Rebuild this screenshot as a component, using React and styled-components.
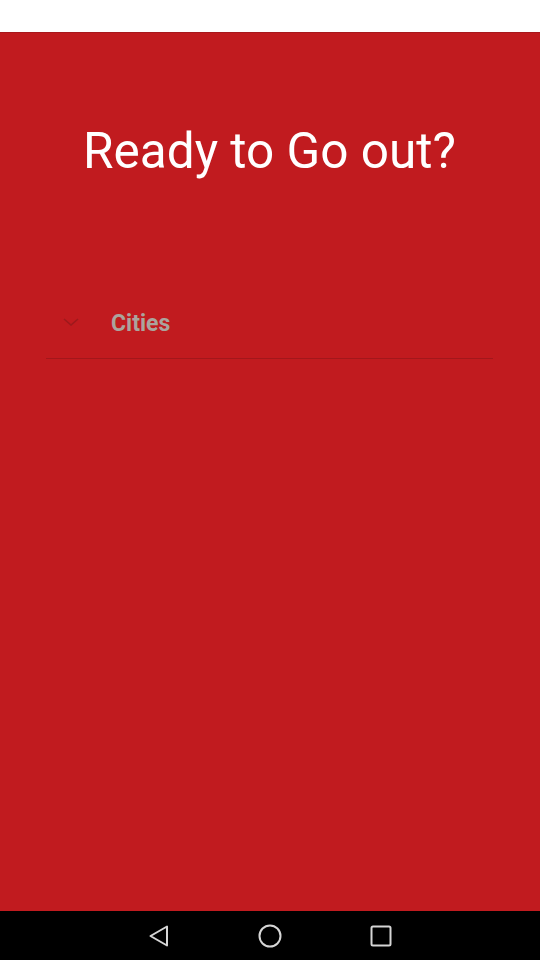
import React from 'react'
import styled, { createGlobalStyle } from 'styled-components'

const GlobalStyle = createGlobalStyle`
html, body {
    margin: 0;
    padding: 0;
    background: #ffffff;
    font-family: Roboto, "Noto Sans", sans-serif;
}
`

export default function App() {
    return (
        <Screen>
            <GlobalStyle />
            <StatusBar />
            <Main>
                <Title>Ready to Go out?</Title>
                <Dropdown>
                    <Chevron viewBox="0 0 16 8">
                        <path d="M1 1 L8 7 L15 1" fill="none" stroke="#9e191c" strokeWidth="1.6" />
                    </Chevron>
                    <DropdownLabel>Cities</DropdownLabel>
                </Dropdown>
            </Main>
            <NavBar>
                <svg width="22" height="24" viewBox="0 0 22 24">
                    <path d="M19 2.5 L19 21.5 L2.5 12 Z" fill="none" stroke="#d6d6d6" strokeWidth="2" strokeLinejoin="round" />
                </svg>
                <svg width="24" height="24" viewBox="0 0 24 24">
                    <circle cx="12" cy="12" r="10.5" fill="none" stroke="#d6d6d6" strokeWidth="2" />
                </svg>
                <svg width="22" height="22" viewBox="0 0 22 22">
                    <rect x="1.5" y="1.5" width="19" height="19" rx="1.5" fill="none" stroke="#d6d6d6" strokeWidth="2" />
                </svg>
            </NavBar>
        </Screen>
    )
}

const Screen = styled.div`
display: flex;
flex-direction: column;
width: 540px;
height: 960px;
`

const StatusBar = styled.div`
height: 32px;
background: #ffffff;
border-bottom: 1px solid #a8181c;
`

const Main = styled.div`
flex: 1;
background: #c11b1f;
display: flex;
flex-direction: column;
padding: 0 47px 0 46px;
`

const Title = styled.h1`
margin: 88px 0 0;
font-weight: 400;
font-size: 49.5px;
line-height: 60px;
color: #ffffff;
text-align: center;
`

const Dropdown = styled.div`
display: flex;
align-items: center;
margin-top: 113px;
height: 64px;
border-bottom: 1px solid #a3171b;
`

const Chevron = styled.svg`
width: 16px;
height: 8px;
margin-left: 17px;
margin-top: -8px;
`

const DropdownLabel = styled.span`
margin-left: 32px;
font-size: 23px;
font-weight: 700;
color: #aba49d;
margin-top: -6px;
`

const NavBar = styled.div`
height: 49px;
background: #000000;
display: flex;
align-items: center;
justify-content: center;
gap: 88px;
`
